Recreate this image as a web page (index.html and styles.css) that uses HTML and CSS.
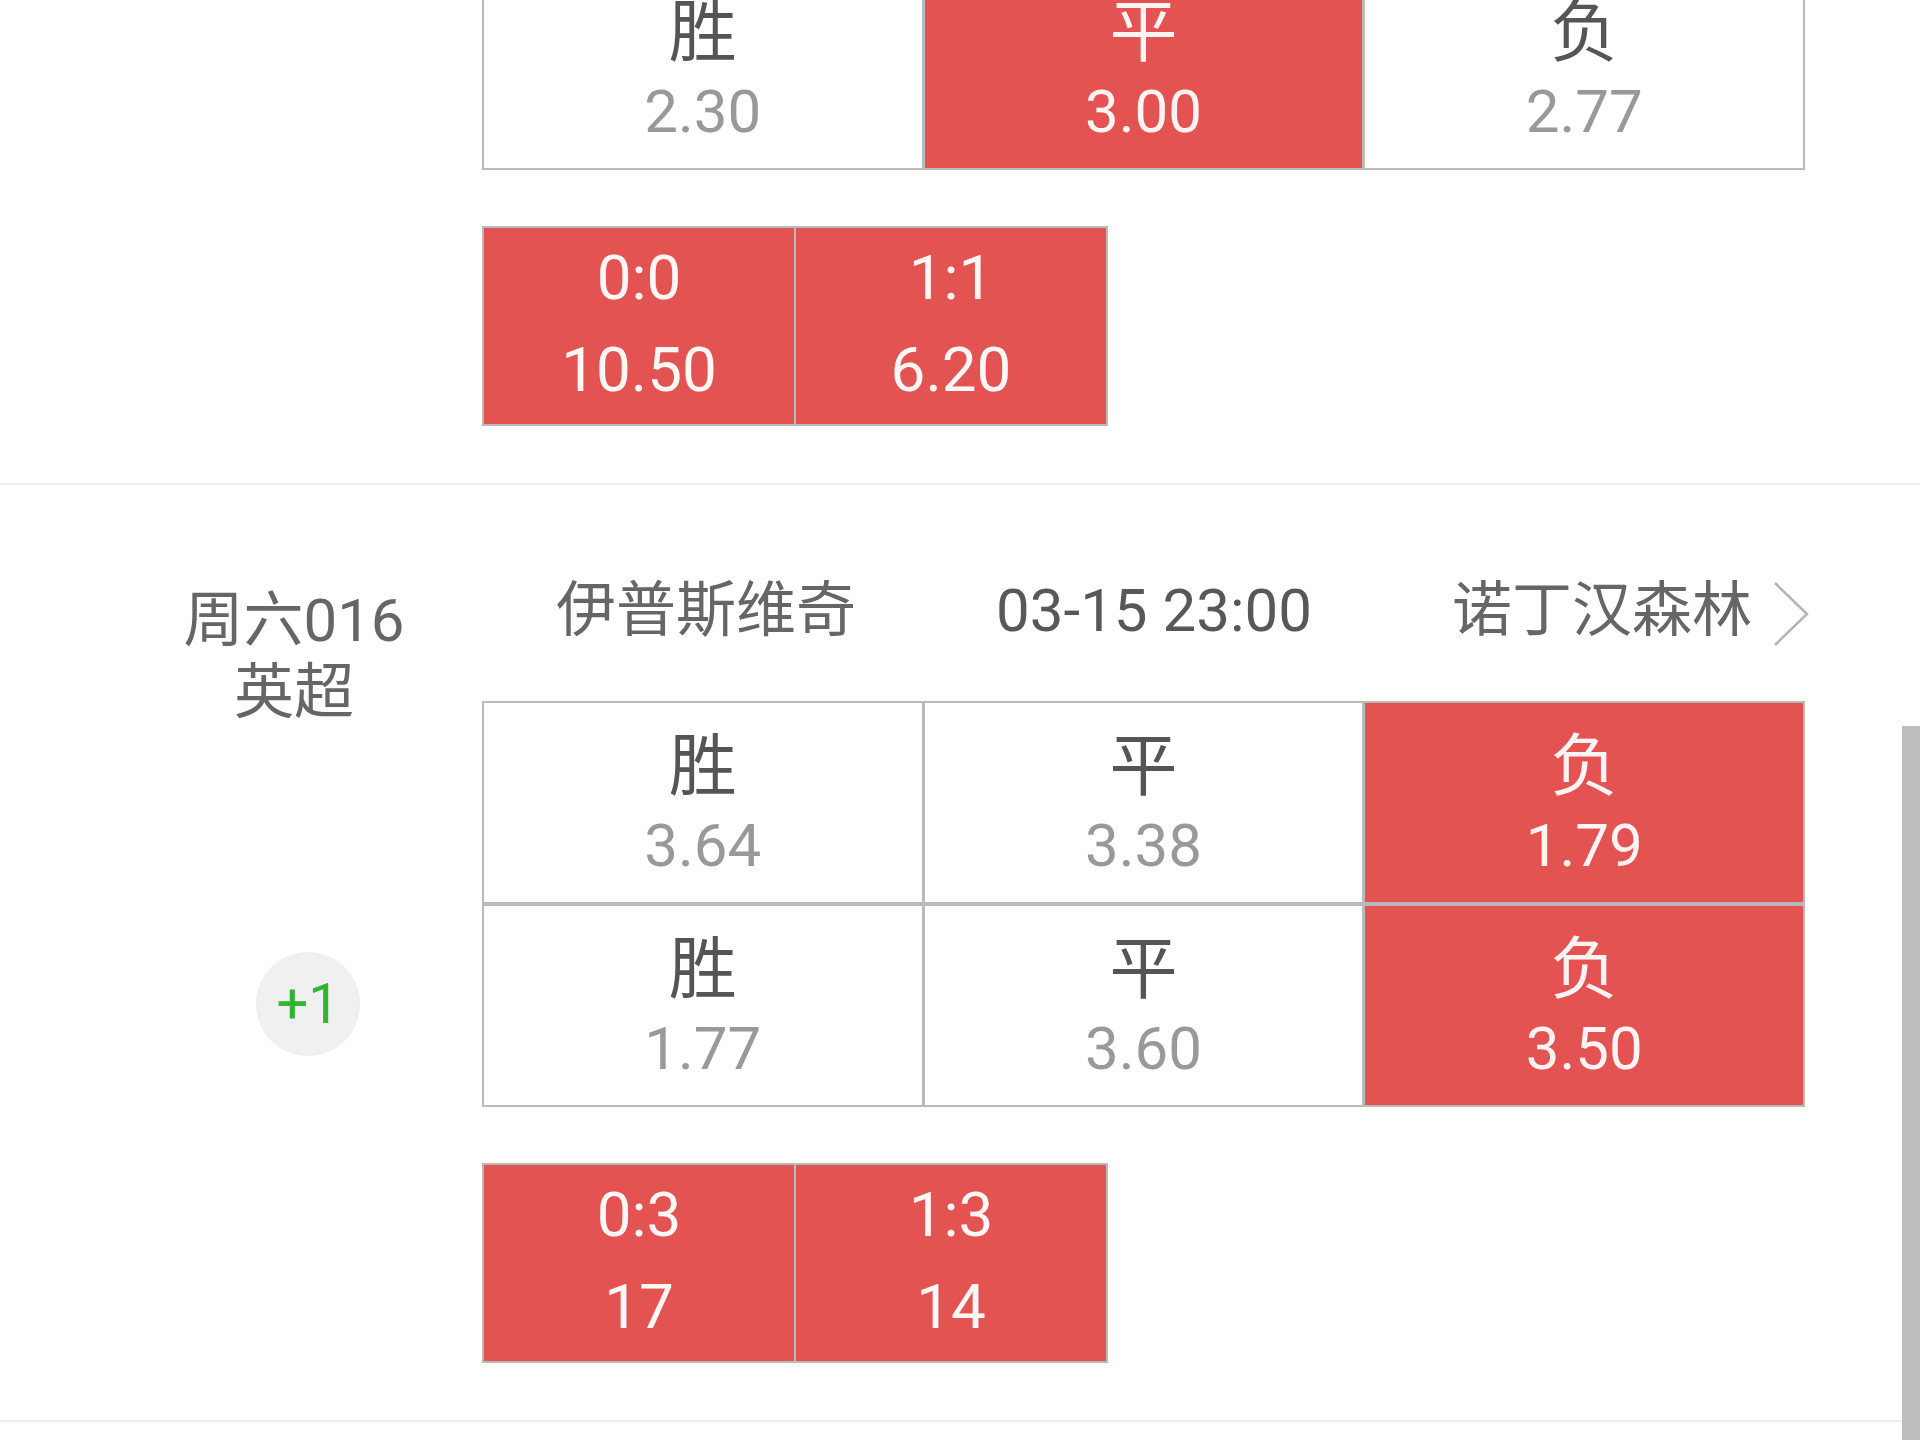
FILE: index.html
```html
<!DOCTYPE html>
<html lang="zh-CN">
<head>
<meta charset="utf-8">
<title>竞彩</title>
<link rel="stylesheet" href="styles.css">
</head>
<body>
<div class="page">
  <section class="match match-first">
    <div class="side"></div>
    <div class="main">
      <div class="odds">
        <div class="cell"><span class="lbl">胜</span><span class="num">2.30</span></div>
        <div class="cell sel"><span class="lbl">平</span><span class="num">3.00</span></div>
        <div class="cell"><span class="lbl">负</span><span class="num">2.77</span></div>
      </div>
      <div class="scores">
        <div class="score"><span>0:0</span><span>10.50</span></div>
        <div class="score"><span>1:1</span><span>6.20</span></div>
      </div>
    </div>
  </section>

  <section class="match">
    <div class="side">
      <div class="league">周六016<br>英超</div>
      <div class="badge">+1</div>
    </div>
    <div class="main">
      <div class="head">
        <div class="team">伊普斯维奇</div>
        <div class="time">03-15 23:00</div>
        <div class="team"><span class="away">诺丁汉森林<svg class="chev" width="36" height="64" viewBox="0 0 36 64"><polyline points="2,1 34,32 2,63" fill="none" stroke="#b4b4b4" stroke-width="2.5"/></svg></span></div>
      </div>
      <div class="odds">
        <div class="cell"><span class="lbl">胜</span><span class="num">3.64</span></div>
        <div class="cell"><span class="lbl">平</span><span class="num">3.38</span></div>
        <div class="cell sel"><span class="lbl">负</span><span class="num">1.79</span></div>
        <div class="cell"><span class="lbl">胜</span><span class="num">1.77</span></div>
        <div class="cell"><span class="lbl">平</span><span class="num">3.60</span></div>
        <div class="cell sel"><span class="lbl">负</span><span class="num">3.50</span></div>
      </div>
      <div class="scores">
        <div class="score"><span>0:3</span><span>17</span></div>
        <div class="score"><span>1:3</span><span>14</span></div>
      </div>
    </div>
  </section>

  <div class="scrollbar"></div>
</div>
</body>
</html>
```
FILE: styles.css
```css
html, body {
  margin: 0;
  padding: 0;
  background: #ffffff;
}

body {
  width: 1920px;
  height: 1440px;
  overflow: hidden;
  font-family: Roboto, "Noto Sans CJK SC", sans-serif;
}

.page {
  position: relative;
  width: 1920px;
  height: 1440px;
  overflow: hidden;
}

.match {
  display: flex;
  padding-bottom: 57px;
  border-bottom: 2px solid #eeeeee;
}

.match-first {
  margin-top: -33px;
}

.side {
  width: 482px;
  flex: none;
  box-sizing: border-box;
  padding-left: 106px;
}

.main {
  width: 1323px;
  flex: none;
}

.league {
  margin-top: 100px;
  width: 376px;
  text-align: center;
  font-size: 60px;
  line-height: 72px;
  color: #666666;
}

.badge {
  margin-top: 223px;
  margin-left: 150px;
  width: 104px;
  height: 104px;
  border-radius: 50%;
  background: #f0f0f0;
  color: #2fb52f;
  font-size: 56px;
  line-height: 104px;
  text-align: center;
}

.head {
  display: grid;
  grid-template-columns: repeat(3, 448px);
  height: 80px;
  padding-top: 86px;
  padding-bottom: 50px;
  line-height: 80px;
  font-size: 60px;
  text-align: center;
}

.team {
  color: #666666;
}

.time {
  color: #585858;
}

.away {
  position: relative;
}

.chev {
  position: absolute;
  left: calc(100% + 21px);
  top: 7px;
}

.odds {
  display: grid;
  grid-template-columns: repeat(3, 1fr);
  column-gap: 3px;
  row-gap: 4px;
  padding: 2px;
  background: #bababa;
}

.cell {
  height: 199px;
  box-sizing: border-box;
  padding-top: 24px;
  background: #ffffff;
  display: flex;
  flex-direction: column;
  align-items: center;
}

.lbl {
  font-size: 68px;
  line-height: 80px;
  color: #555555;
}

.num {
  font-size: 60px;
  line-height: 78px;
  color: #999999;
}

.sel {
  background: #e35351;
}

.sel .lbl,
.sel .num {
  color: #fff3f3;
}

.scores {
  display: grid;
  grid-template-columns: repeat(2, 1fr);
  width: 626px;
  box-sizing: border-box;
  margin-top: 56px;
  padding: 2px;
  gap: 2px;
  background: #bababa;
}

.score {
  height: 196px;
  box-sizing: border-box;
  padding-top: 4px;
  background: #e35351;
  display: flex;
  flex-direction: column;
  align-items: center;
  font-size: 62px;
  line-height: 92px;
  color: #fff6f6;
}

.scrollbar {
  position: absolute;
  right: 0;
  top: 726px;
  width: 18px;
  height: 714px;
  background: #bdbdbd;
}
```
